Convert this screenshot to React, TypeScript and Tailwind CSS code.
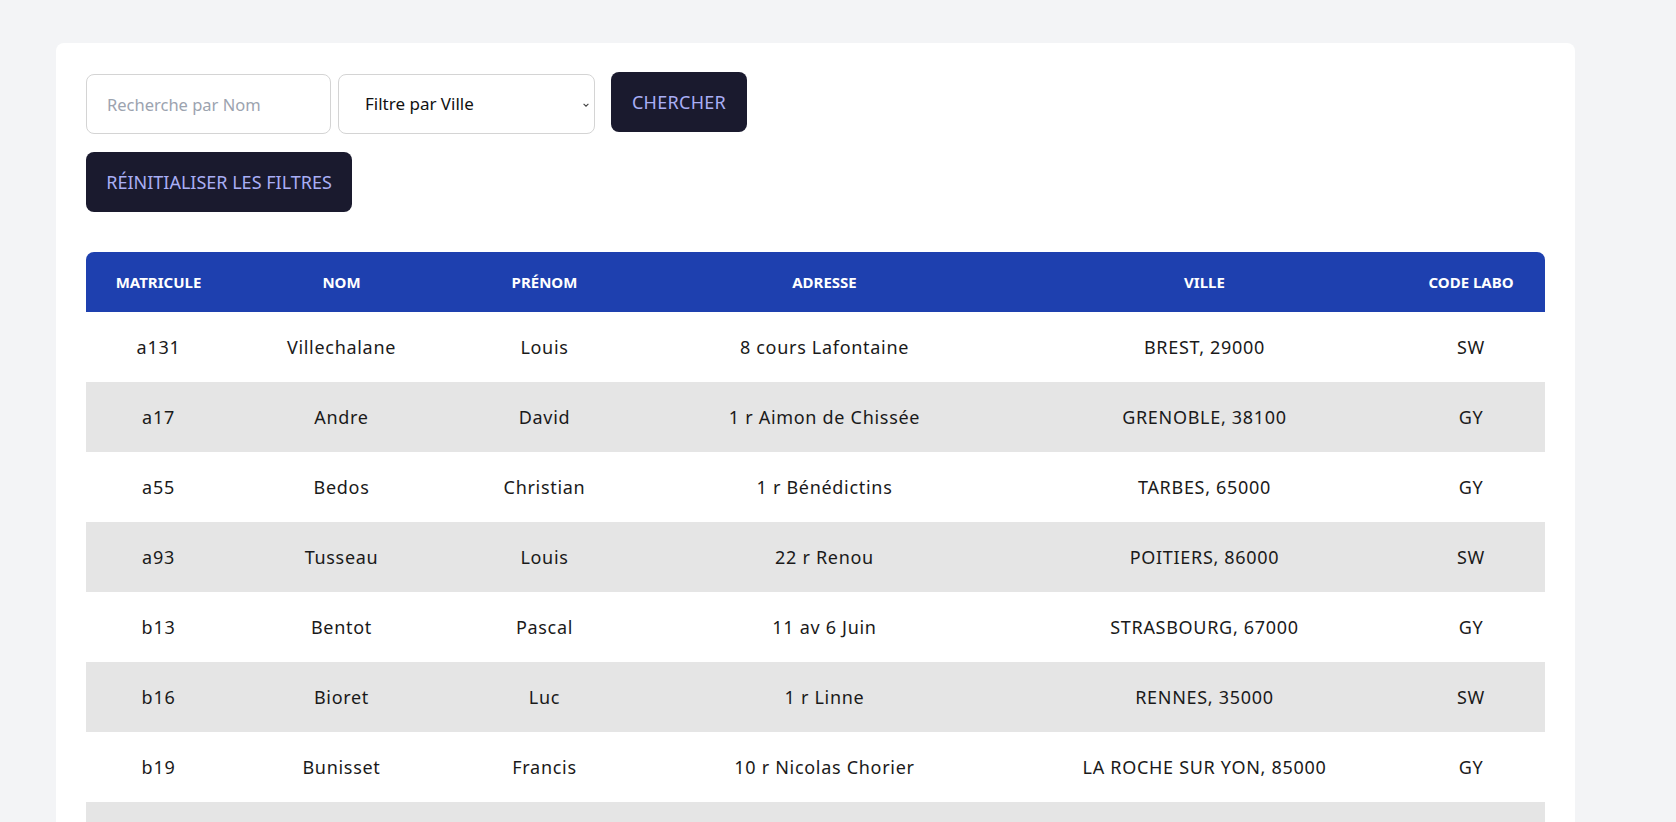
import { useState } from "react";

const visiteurs = [
  { matricule: "a131", nom: "Villechalane", prenom: "Louis", adresse: "8 cours Lafontaine", ville: "BREST, 29000", labo: "SW" },
  { matricule: "a17", nom: "Andre", prenom: "David", adresse: "1 r Aimon de Chissée", ville: "GRENOBLE, 38100", labo: "GY" },
  { matricule: "a55", nom: "Bedos", prenom: "Christian", adresse: "1 r Bénédictins", ville: "TARBES, 65000", labo: "GY" },
  { matricule: "a93", nom: "Tusseau", prenom: "Louis", adresse: "22 r Renou", ville: "POITIERS, 86000", labo: "SW" },
  { matricule: "b13", nom: "Bentot", prenom: "Pascal", adresse: "11 av 6 Juin", ville: "STRASBOURG, 67000", labo: "GY" },
  { matricule: "b16", nom: "Bioret", prenom: "Luc", adresse: "1 r Linne", ville: "RENNES, 35000", labo: "SW" },
  { matricule: "b19", nom: "Bunisset", prenom: "Francis", adresse: "10 r Nicolas Chorier", ville: "LA ROCHE SUR YON, 85000", labo: "GY" },
  { matricule: "b25", nom: "Bunisset", prenom: "Denise", adresse: "23 r Manin", ville: "PARIS, 75019", labo: "SW" },
];

const App = () => {
  const [nom, setNom] = useState("");

  return (
    <div className="min-h-screen bg-[#f3f4f6] pt-[43px] pl-[56px]" style={{ fontFamily: "'Noto Sans', Lato, sans-serif" }}>
      <div className="w-[1519px] rounded-lg bg-white px-[30px] pt-[29px] pb-[30px]">
        {/* filtres */}
        <div className="flex items-start">
          <input
            value={nom}
            onChange={(e) => setNom(e.target.value)}
            placeholder="Recherche par Nom"
            className="mt-[2px] h-[60px] w-[245px] rounded-lg border border-[#d4d4d4] px-5 text-[16.5px] text-gray-900 placeholder:text-[#9ca3af] outline-none"
          />
          <div className="relative ml-[7px] mt-[2px]">
            <select className="h-[60px] w-[257px] appearance-none rounded-lg border border-[#d4d4d4] bg-white pl-[26px] text-[17px] text-[#111] outline-none">
              <option>Filtre par Ville</option>
            </select>
            <svg className="pointer-events-none absolute right-[5px] top-[27px] h-[8px] w-[8px] text-[#444]" viewBox="0 0 10 10" fill="none" stroke="currentColor" strokeWidth="1.4">
              <path d="M2 3.5l3 3 3-3" />
            </svg>
          </div>
          <button className="ml-4 h-[60px] w-[136px] rounded-lg bg-[#1a1a2e] text-[18px] tracking-[0.3px] uppercase text-[#a9aef5]">
            Chercher
          </button>
        </div>
        <button className="mt-[18px] h-[60px] w-[266px] rounded-lg bg-[#1a1a2e] text-[18px] uppercase text-[#a9aef5]">
          Réinitialiser les filtres
        </button>

        {/* tableau */}
        <table className="mt-10 w-[1459px] table-fixed border-collapse text-center">
          <thead>
            <tr className="h-[60px] bg-[#1e40af] text-[15px] font-bold uppercase text-white">
              <th className="w-[145px] rounded-tl-lg">Matricule</th>
              <th className="w-[221px]">Nom</th>
              <th className="w-[185px]">Prénom</th>
              <th className="w-[375px]">Adresse</th>
              <th className="w-[385px]">Ville</th>
              <th className="w-[148px] rounded-tr-lg">Code Labo</th>
            </tr>
          </thead>
          <tbody className="text-[18px] tracking-[0.7px] text-[#1a1a1a]">
            {visiteurs.map((v, i) => (
              <tr key={v.matricule} className={i % 2 === 0 ? "h-[70px] bg-white" : "h-[70px] bg-[#e5e5e5]"}>
                <td>{v.matricule}</td>
                <td>{v.nom}</td>
                <td>{v.prenom}</td>
                <td>{v.adresse}</td>
                <td>{v.ville}</td>
                <td>{v.labo}</td>
              </tr>
            ))}
          </tbody>
        </table>
      </div>
    </div>
  );
};

export default App;
